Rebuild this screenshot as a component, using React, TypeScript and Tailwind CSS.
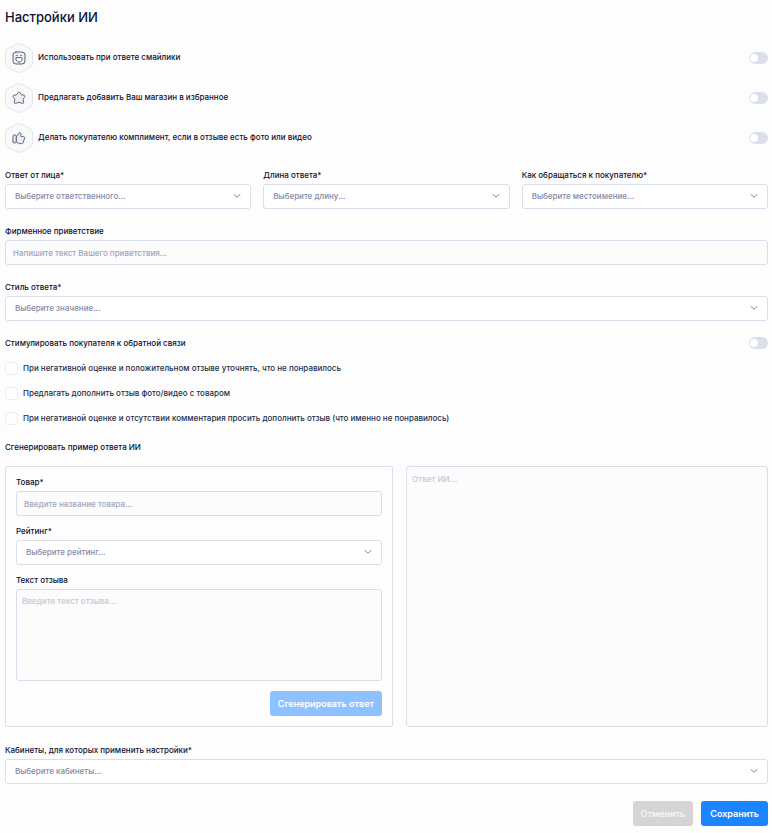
import { useState } from "react";
import type { ReactNode } from "react";

const labelClass = "text-[8px] leading-3 font-medium text-[#0e1133]";
const inputClass =
  "block w-full rounded-[3px] border border-[#dadeea] bg-[#fcfcfc] text-[8px] text-[#0e1133] focus:outline-none focus:border-[#1b84ff]";

const SmileIcon = () => (
  <svg width="14" height="14" viewBox="0 0 14 14" fill="#eceef2" stroke="#5a6380" strokeLinecap="round" strokeLinejoin="round">
    <rect x="1" y="1" width="12" height="12" rx="3" />
    <path d="M4.200 4.500c.3-.6 1.200-.6 1.500 0M8.300 4.500c.3-.6 1.200-.6 1.500 0" />
    <path d="M4.300 6.600h5.400c.3 0 .5.200.5.500 0 2.200-1.300 4-3.200 4S3.800 9.300 3.800 7.100c0-.3.200-.5.500-.5z" fill="#ffffff" />
  </svg>
);

const StarIcon = () => (
  <svg width="14" height="14" viewBox="0 0 14 14" fill="#eceef2" stroke="#5a6380" strokeLinecap="round" strokeLinejoin="round">
    <path d="M6 1.600c.5-.9 1.500-.9 2 0l1 1.700c.2.300.5.500.8.600l2.100.3c1.200.2 1.500 1.100.8 1.900l-1.200 1.400c-.3.300-.4.700-.3 1.100l.4 2.400c.2 1.300-.6 1.900-1.700 1.300l-2-.9c-.5-.2-1.300-.2-1.800 0l-2 .9c-1.100.6-1.900 0-1.700-1.300l.4-2.400c.1-.4 0-.8-.3-1.100L1.300 6.100c-.7-.8-.4-1.700.8-1.900l2.100-.3c.3-.1.600-.3.8-.6z" />
  </svg>
);

const LikeIcon = () => (
  <svg width="14" height="14" viewBox="0 0 14 14" fill="#eceef2" stroke="#5a6380" strokeLinecap="round" strokeLinejoin="round">
    <path d="M4.500 10.800l1.800 1.400c.2.200.8.400 1.100.4h2.200c.7 0 1.500-.5 1.600-1.200l1.400-4.300c.3-.8-.2-1.500-1.100-1.500H9.200c-.3 0-.6-.3-.5-.7l.3-1.900c.1-.5-.2-1.100-.8-1.300-.5-.2-1.100 0-1.300.400L4.500 5.600z" />
    <path d="M1 10.800V5.100c0-.8.300-1.100 1.200-1.100h.8c.8 0 1.200.3 1.200 1.100v5.700c0 .8-.4 1.100-1.200 1.100h-.8c-.9 0-1.200-.3-1.200-1.100z" />
  </svg>
);

function Hexagon({ children }: { children: ReactNode }) {
  return (
    <span className="relative flex h-[30px] w-7 shrink-0 items-center justify-center">
      <svg className="absolute inset-0" width="28" height="30" viewBox="0 0 28 30" fill="#f9f9f9" stroke="#e3e5ed">
        <path d="M11.500 1.200Q14 0 16.500 1.200L25 5.700Q27.500 7 27.500 9.800V20.200Q27.500 23 25 24.300L16.500 28.800Q14 30 11.500 28.800L3 24.300Q.5 23 .5 20.200V9.800Q.5 7 3 5.700Z" />
      </svg>
      <span className="relative">{children}</span>
    </span>
  );
}

function Toggle({ id }: { id: string }) {
  return (
    <input
      id={id}
      type="checkbox"
      role="switch"
      className="h-3 w-[19px] shrink-0 cursor-pointer appearance-none rounded-full bg-[#dbdfe9] px-px py-0.5 before:block before:size-2 before:rounded-full before:bg-white checked:bg-[#1b84ff] checked:before:ml-[9px]"
    />
  );
}

type SelectProps = {
  id: string;
  label: string;
  placeholder: string;
  options: string[];
};

function SelectField({ id, label, placeholder, options }: SelectProps) {
  return (
    <div className="flex min-w-0 flex-col gap-[3px]">
      <label htmlFor={id} className={labelClass}>
        {label}
      </label>
      <div className="relative">
        <select
          id={id}
          defaultValue=""
          className="block h-[25px] w-full appearance-none rounded-[3px] border border-[#dadeea] bg-white pr-6 pb-0.5 pl-[9px] text-[8px] font-medium text-[#858aa5] focus:border-[#1b84ff] focus:outline-none"
        >
          <option value="">{placeholder}</option>
          {options.map((o) => (
            <option key={o}>{o}</option>
          ))}
        </select>
        <svg
          className="pointer-events-none absolute top-2 right-2.5"
          width="8"
          height="8"
          viewBox="0 0 8 8"
          fill="none"
          stroke="#7e86a5"
          strokeLinecap="round"
          strokeLinejoin="round"
        >
          <path d="M1 2.500L4 5.200L7 2.500" />
        </svg>
      </div>
    </div>
  );
}

function TextField({ id, label, placeholder }: { id: string; label: string; placeholder: string }) {
  return (
    <div className="flex flex-col gap-[3px]">
      <label htmlFor={id} className={labelClass}>
        {label}
      </label>
      <input
        id={id}
        type="text"
        placeholder={placeholder}
        className={`${inputClass} h-[25px] px-[7px] font-medium placeholder:text-[#a1a5bb]`}
      />
    </div>
  );
}

const toggles = [
  { id: "emoji", icon: <SmileIcon />, text: "Использовать при ответе смайлики" },
  { id: "favorite", icon: <StarIcon />, text: "Предлагать добавить Ваш магазин в избранное" },
  { id: "compliment", icon: <LikeIcon />, text: "Делать покупателю комплимент, если в отзыве есть фото или видео" },
];

const feedbackOptions = [
  "При негативной оценке и положительном отзыве уточнять, что не понравилось",
  "Предлагать дополнить отзыв фото/видео с товаром",
  "При негативной оценке и отсутствии комментария просить дополнить отзыв (что именно не понравилось)",
];

export default function App() {
  const [review, setReview] = useState("");

  return (
    <main className="min-h-screen bg-[#fdfdfd] pt-[7px] pr-1 pb-[7px] pl-[5px] font-['Inter',sans-serif]">
      <h1 className="text-[13px] leading-5 font-medium text-[#0e1133]">Настройки ИИ</h1>

      <div className="mt-4 flex flex-col gap-2.5">
        {toggles.map((t) => (
          <div key={t.id} className="flex items-center justify-between">
            <div className="flex items-center gap-[5px]">
              <Hexagon>{t.icon}</Hexagon>
              <label htmlFor={t.id} className={`${labelClass} pb-0.5`}>
                {t.text}
              </label>
            </div>
            <Toggle id={t.id} />
          </div>
        ))}
      </div>

      <form className="mt-4 flex flex-col gap-4" onSubmit={(e) => e.preventDefault()}>
        <div className="grid grid-cols-3 gap-3">
          <SelectField id="person" label="Ответ от лица*" placeholder="Выберите ответственного..." options={["Менеджер", "Магазин"]} />
          <SelectField id="length" label="Длина ответа*" placeholder="Выберите длину..." options={["Короткий", "Длинный"]} />
          <SelectField id="pronoun" label="Как обращаться к покупателю*" placeholder="Выберите местоимение..." options={["Вы", "Ты"]} />
        </div>

        <TextField id="greeting" label="Фирменное приветствие" placeholder="Напишите текст Вашего приветствия..." />

        <SelectField id="style" label="Стиль ответа*" placeholder="Выберите значение..." options={["Деловой", "Дружеский"]} />

        <div>
          <div className="flex items-center justify-between">
            <label htmlFor="feedback" className={labelClass}>
              Стимулировать покупателя к обратной связи
            </label>
            <Toggle id="feedback" />
          </div>
          <div className="mt-[13px] flex flex-col gap-3">
            {feedbackOptions.map((text) => (
              <label key={text} className="flex items-center gap-[5px] text-[8px] leading-[13px] font-medium text-[#252f4a]">
                <input
                  type="checkbox"
                  className="size-[13px] shrink-0 appearance-none rounded-[3px] border border-[#ebedf2] bg-[#fdfdfd] checked:bg-[#1b84ff]"
                />
                {text}
              </label>
            ))}
          </div>
        </div>

        <section>
          <h2 className={labelClass}>Сгенерировать пример ответа ИИ</h2>
          <div className="mt-[13px] grid grid-cols-[388fr_362fr] gap-[13px]">
            <div className="flex flex-col gap-2.5 rounded-[2px] border border-[#dadeea] px-2.5 pt-[9px] pb-2.5">
              <div className="flex flex-col gap-[9px]">
                <TextField id="product" label="Товар*" placeholder="Введите название товара..." />
                <SelectField id="rating" label="Рейтинг*" placeholder="Выберите рейтинг..." options={["5", "4", "3", "2", "1"]} />
                <div className="flex flex-col gap-[3px]">
                  <label htmlFor="review" className={labelClass}>
                    Текст отзыва
                  </label>
                  <textarea
                    id="review"
                    value={review}
                    onChange={(e) => setReview(e.target.value)}
                    placeholder="Введите текст отзыва..."
                    className={`${inputClass} h-[92px] resize-none p-[5px] leading-3 font-semibold placeholder:text-[#c8ccdb]`}
                  />
                </div>
              </div>
              <button
                type="button"
                className="h-[25px] self-end rounded-[3px] bg-[#8dc1ff] px-2 text-[9px] font-semibold text-white"
              >
                Сгенерировать ответ
              </button>
            </div>
            <textarea
              aria-label="Ответ ИИ"
              readOnly
              placeholder="Ответ ИИ..."
              className="min-w-0 resize-none rounded-[3px] border border-[#dadeea] bg-[#fcfcfc] px-[5px] py-1.5 text-[8px] leading-3 font-semibold placeholder:text-[#c8ccdb] focus:outline-none"
            />
          </div>
        </section>

        <div className="flex flex-col gap-[17px] pt-px">
          <SelectField
            id="cabinets"
            label="Кабинеты, для которых применить настройки*"
            placeholder="Выберите кабинеты..."
            options={["Основной кабинет"]}
          />

          <div className="flex justify-end gap-2">
            <button type="button" className="h-[25px] rounded-[3px] bg-[#d6d4d6] px-2 text-[9px] font-semibold text-[#f8f6f8]">
              Отменить
            </button>
            <button type="submit" className="h-[25px] rounded-[3px] bg-[#1b84ff] px-[9px] text-[9px] font-semibold text-white">
              Сохранить
            </button>
          </div>
        </div>
      </form>
    </main>
  );
}
